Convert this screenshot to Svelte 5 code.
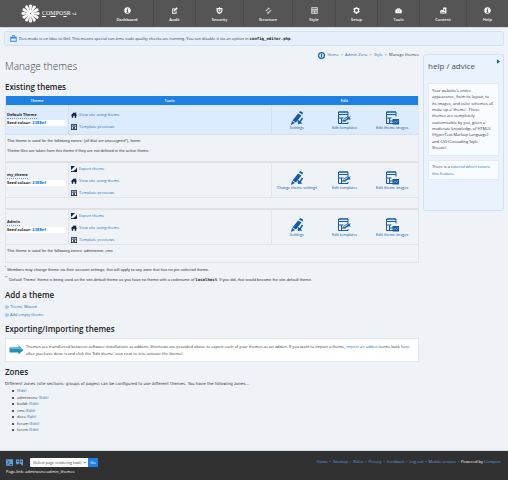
<script>
  const menu = [
    ['Dashboard', 'info', 53], ['Audit', 'audit', 42], ['Security', 'shield', 48],
    ['Structure', 'structure', 49], ['Style', 'style', 43], ['Setup', 'gear', 42],
    ['Tools', 'tools', 42], ['Content', 'content', 47], ['Help', 'info', 42]
  ];
  const columns = `100fr ${menu.map((m) => m[2] + 'fr').join(' ')}`;
  const tools = { export: 'Export theme', home: 'View site using theme', preview: 'Template previews' };
  const themes = [
    { name: 'Default Theme', tools: ['home', 'preview'], settings: 'Settings', kind: 'default' },
    { name: 'my_theme', tools: ['export', 'home', 'preview'], settings: 'Change theme settings', kind: 'empty' },
    { name: 'Admin', tools: ['export', 'home', 'preview'], settings: 'Settings', kind: 'admin' }
  ];
  const zones = ['', 'adminzone', 'buildr', 'cms', 'docs', 'forum', 'lorem'];
  const footerLinks = ['Home', 'Sitemap', 'Rules', 'Privacy', 'Feedback', 'Log out', 'Mobile version'];
  const advice = [
    "Your website's entire", 'appearance, from its layout, to', 'its images, and color schemes all',
    "make up a 'theme'. These", 'themes are completely', 'customisable by you, given a',
    'moderate knowledge of HTML5', '(HyperText Markup Language)', 'and CSS (Cascading Style', 'Sheets).'
  ];
  let tool = $state('');
</script>

{#snippet icon(name)}
  <svg class="icon" viewBox="0 0 24 24" fill="currentColor" stroke="none" aria-hidden="true">
    {#if name === 'info'}
      <path fill-rule="evenodd" d="M12 1a11 11 0 1 0 0 22a11 11 0 0 0 0-22zM10 5h4v4h-4zM9 10h5v7h2v3H8v-3h2v-4H9z" />
    {:else if name === 'audit'}
      <path d="M4 5h10v3H7v12h9v-5l3-3v11H4z" /><path d="M9 15l1-5L19 1l4 4-9 9zM9 10h5v2H9z" />
    {:else if name === 'shield'}
      <path fill-rule="evenodd" d="M12 0l3 3h7v9c0 6-5 10-10 12C7 22 2 18 2 12V3h7zM6 7v5c0 3 2 5 6 7c4-2 6-4 6-7V7z" /><path d="M9 8h6v3l-3 5-3-5z" />
    {:else if name === 'structure'}
      <path d="M1 13l9-8-1-3 7 1-2 7-2-3-8 8zM23 11l-9 9 1 3-8-1 2-7 2 3 8-8z" opacity=".75" />
    {:else if name === 'style'}
      <path fill-rule="evenodd" d="M1 1h22v22H1zM4 3v3h16V3zM4 9v3h16V9zM4 15v5h6v-5zM13 15v5h7v-5z" opacity=".85" />
    {:else if name === 'gear'}
      <path fill-rule="evenodd" d="M9 1h6l1 3 4-1 3 5-3 3 3 4-3 5-4-1-1 4H9l-1-4-4 1-3-5 3-4-3-3 3-5 4 1zM12 7a5 5 0 1 0 0 10a5 5 0 0 0 0-10z" />
    {:else if name === 'tools'}
      <path fill-rule="evenodd" d="M7 4h10v4h4l2 3v10H1V11l2-3h4zM9 6v2h6V6zM7 12v3h2v-3zM15 12v3h2v-3z" />
    {:else if name === 'content'}
      <path fill-rule="evenodd" d="M11 2h11v20H1V12l6-3 4 4zM16 5l-3 8h6zM4 15v4h13v-2H8z" />
    {:else if name === 'export'}
      <path fill="#0c2340" d="M0 0h16L0 16z" /><path fill="#0c2340" d="M24 6v18H8l-2-3 10-5z" /><path fill="#0c2340" d="M0 20h7v4H0z" />
    {:else if name === 'home'}
      <path fill="#0c2340" d="M12 1l5 5V2h4v8l3 3-2 2-1-1v9h-6v-8H9v8H3v-9l-1 1-2-2z" />
    {:else if name === 'preview'}
      <path fill="#0c2340" fill-rule="evenodd" d="M1 0h22v21h1v3H0v-3h1zM4 3v7h16V3zM4 12v9h16v-9z" /><path fill="#0c2340" d="M7 4h3v5H7zM14 4h3v5h-3zM8 13h8v3h-2v2h3v3H7v-3h3v-2H8z" />
    {:else if name === 'robot'}
      <path fill="#2d86e8" fill-rule="evenodd" d="M7 1h10v5h6v17H1V6h6zM9 3v3h6V3zM4 10v2h16v-2zM4 14v6h16v-6z" />
    {:else if name === 'crumb'}
      <path fill="#145ca4" fill-rule="evenodd" d="M12 0a12 12 0 1 0 0 24a12 12 0 0 0 0-24zM12 4a8 8 0 1 1 0 16a8 8 0 0 1 0-16z" /><path fill="#145ca4" d="M10 6h4v12h-4z" />
    {:else if name === 'chevrons'}
      <path fill="none" stroke="#3b95ee" stroke-width="5" d="M2 3l8 9-8 9M12 3l9 9-9 9" />
    {:else if name === 'console'}
      <path fill-rule="evenodd" d="M0 1h24v22H0zM4 5l6 6-6 6v3l9-9-9-8zM12 17v3h9v-3z" />
    {:else if name === 'feedback'}
      <path fill-rule="evenodd" d="M0 2h11v14H7l-4 5v-5H0zM4 6v4h4V6zM13 2h11v20h-3l-4-5h-4zM16 6v5h4V6z" />
    {/if}
  </svg>
{/snippet}

{#snippet editIcon(name)}
  <svg class="edit-icon" viewBox="0 0 28 28" fill="none" stroke="#155ca6" stroke-width="2" aria-hidden="true">
    {#if name === 'settings'}
      <path fill="#155ca6" stroke="none" d="M18 3l2-3 6 3-1 4zM16 5l7 4-11 14-7-4zM4 20l6 4-8 4z" />
      <path stroke-width="3" d="M25 14l-6 9" /><path fill="#155ca6" stroke="none" d="M15 17l1 9 9-1z" />
    {:else}
      <path d="M3 2h19v5H3zM3 7v18h19v-3M22 7v4M3 14h10M9 14v11M9 20h8" />
      <path fill="#155ca6" stroke="none" d="M3 1h19v2H3z" />
      {#if name === 'templates'}
        <path fill="#155ca6" stroke="none" d="M12 20l2-5 8-5 1 2 5-1-3 3 3 3h-6l-6 4z" /><path stroke="#dfeafa" d="M14 18l7-5" />
      {:else}
        <path fill="#155ca6" stroke="none" d="M15 16h13v11H15z" /><path stroke="#c9ddf5" d="M17 24l3-4 3 3 3-4" stroke-width="1" />
      {/if}
    {/if}
  </svg>
{/snippet}

<div class="page">
  <header style="grid-template-columns: {columns}">
    <a class="logo" href="#home" aria-label="Composr home">
      <svg viewBox="0 0 36 36" aria-hidden="true">
        {#each Array(12) as _, i}
          <path fill="#fff" d="M17 17L15 3Q17-1 21 2L19 17z" transform="rotate({i * 30} 18 18)" />
        {/each}
      </svg>
      <span class="brand"><u>C</u>O<u>M</u>PO<u>S</u>R <small>v4</small></span>
    </a>
    {#each menu as [label, glyph]}
      <a class="item" href="#{label}">{@render icon(glyph)}<span>{label}</span></a>
    {/each}
  </header>

  <p class="notice">{@render icon('robot')}<span>Dev-mode is on (due to Git). This means special run-time code quality checks are running. You can disable it via an option in <code>config_editor.php</code>.</span></p>

  <div class="body">
    <main>
      <nav class="crumbs">{@render icon('crumb')}<a href="#home">Home</a><b>&gt;</b><a href="#admin">Admin Zone</a><b>&gt;</b><a href="#style">Style</a><b>&gt;</b><span>Manage themes</span></nav>
      <h1>Manage themes</h1>
      <h2>Existing themes</h2>
      <table>
        <colgroup><col class="c-theme" /><col /><col class="c-edit" /></colgroup>
        <thead><tr><th>Theme</th><th>Tools</th><th>Edit</th></tr></thead>
        {#each themes as t}
          <tbody class={t.kind}>
            <tr class="main-row">
              <td><strong class="name">{t.name}</strong><div class="seed">Seed colour: <b>2388ef</b></div></td>
              <td>
                <div class="tools">
                  {#each t.tools as k}<a href="#{k}">{@render icon(k)}{tools[k]}</a>{/each}
                </div>
              </td>
              <td>
                <div class="edits">
                  <a href="#settings">{@render editIcon('settings')}{t.settings}</a>
                  <a href="#templates">{@render editIcon('templates')}Edit templates</a>
                  <a href="#images">{@render editIcon('images')}Edit theme images</a>
                </div>
              </td>
            </tr>
            <tr class="desc">
              <td colspan="3">
                {#if t.kind === 'default'}
                  <p>This theme is used for the following zones: (<i>all that are unassigned*</i>), lorem</p>
                  <p>Theme files are taken from this theme if they are not defined in the active theme.</p>
                {:else if t.kind === 'admin'}
                  <p>This theme is used for the following zones: adminzone, cms</p>
                {/if}
              </td>
            </tr>
          </tbody>
        {/each}
      </table>
      <p class="note"><sup>*</sup> Members may change theme via their account settings; this will apply to any zone that has no pre-selected theme.</p>
      <p class="note"><sup>**</sup> 'Default Theme' theme is being used as the site-default theme as you have no theme with a codename of <code>localhost</code>. If you did, that would become the site-default theme.</p>

      <h2>Add a theme</h2>
      <div class="actions">
        <a href="#wizard">{@render icon('chevrons')}Theme Wizard</a>
        <a href="#add">{@render icon('chevrons')}Add empty theme</a>
      </div>

      <h2>Exporting/Importing themes</h2>
      <div class="transfer">
        <svg viewBox="0 0 30 20" aria-hidden="true">
          <path fill="#2b8fb5" d="M1 5h18V1l10 9-10 9v-4H1z" /><path fill="#4dbfe4" d="M1 5h18V1l10 9-10-2H1z" />
        </svg>
        <p>Themes are transferred between software installations as addons. Shortcuts are provided above to export each of your themes as an addon. If you want to import a theme, <a href="#import">import an addon</a> (come back here after you have done it and click the 'Edit theme' icon next to it to activate the theme).</p>
      </div>

      <h2>Zones</h2>
      <p class="intro">Different zones (site sections: groups of pages) can be configured to use different themes. You have the following zones...</p>
      <ul>
        {#each zones as z}<li><span>{z} <a href="#zone-{z}">(Edit)</a></span></li>{/each}
      </ul>
    </main>

    <aside>
      <button class="toggle" aria-label="Hide panel"><svg viewBox="0 0 4 6"><path fill="#145ca4" d="M0 0l4 3-4 3z" /></svg></button>
      <h2>help / advice</h2>
      <p class="card tall">{#each advice as line}<span>{line + ' '}</span>{/each}</p>
      <p class="card">There is a <a href="#tutorial">tutorial which covers this feature</a>.</p>
    </aside>
  </div>

  <footer>
    <div class="left">
      <div class="controls">
        <a href="#console" aria-label="Console">{@render icon('console')}</a>
        <a href="#feedback" aria-label="Feedback">{@render icon('feedback')}</a>
        <form onsubmit={(e) => e.preventDefault()}>
          <span class="pick">
            <select aria-label="Page rendering tool" bind:value={tool}><option value="">(Select page rendering tool)</option></select>
            <svg viewBox="0 0 6 4" aria-hidden="true"><path d="M1 1l2 2 2-2" fill="none" stroke="#444" /></svg>
          </span>
          <button>Go</button>
        </form>
      </div>
      <div class="pagelink">Page-link: adminzone:admin_themes</div>
    </div>
    <div class="links">{#each footerLinks as l}<a href="#{l}">{l}</a><span>·</span>{/each}<span>Powered by <a href="#composr">Composr</a></span></div>
  </footer>
</div>

<style>
  :global(body) { background: #eff3f8; }
  .page { font: 4px/6px "Open Sans", "Noto Sans", sans-serif; color: #333; min-height: 100vh; display: flex; flex-direction: column; }
  .page * { box-sizing: border-box; }
  a { color: #276cb0; text-decoration: none; }
  p, h1, h2, ul { margin: 0; }
  code { font: bold 4px/6px "DejaVu Sans Mono", monospace; color: #222; }
  .icon { width: 6px; height: 6px; flex: none; display: block; }
  header { display: grid; height: 28px; background: #555; border-bottom: 1px solid #d4d7da; }
  .logo { display: flex; align-items: center; padding-left: 21px; gap: 2px; color: #fff; }
  .logo svg { width: 19px; height: 19px; }
  .brand { font: 6px/8px "Liberation Serif", serif; }
  .brand small { font-size: 4px; }
  .item { display: flex; flex-direction: column; align-items: center; gap: 3px; padding-top: 7px; color: #fff; font-weight: 600; border-left: 1px solid #4b4b4b; }
  .item .icon { width: 7px; height: 7px; }
  .item span { line-height: 6px; }
  .notice { display: flex; align-items: center; gap: 2px; height: 15px; margin: 3px 4px 0; padding: 0 5px; background: #e5f0fc; border: 1px solid #cfe3f8; border-radius: 2px; }
  .notice .icon { width: 7px; height: 7px; }
  .body { display: flex; align-items: flex-start; gap: 4px; padding: 5px 4px 0 5px; flex: 1; }
  main { flex: 1; min-width: 0; }
  .crumbs { display: flex; justify-content: flex-end; align-items: center; gap: 2px; height: 8px; }
  .crumbs b { font-weight: 600; }
  .crumbs .icon { width: 7px; height: 7px; }
  h1 { font-size: 10px; line-height: 14px; font-weight: 300; color: #444; }
  h2 { font-size: 8px; line-height: 12px; font-weight: 600; color: #222; }
  h1 + h2 { margin-top: 8px; }
  table { width: 100%; table-layout: fixed; border-collapse: separate; border-spacing: 0; margin-top: 3px; border: 1px solid #e1e5e9; border-top: 0; }
  .c-theme { width: 62px; }
  .c-edit { width: 147px; }
  th { background: #1f80e4; color: #fff; font-weight: 600; height: 9px; padding: 0; }
  td { padding: 0 2px 0 1px; vertical-align: middle; }
  .main-row td { height: 35px; border-bottom: 1px solid #e1e5e9; }
  .main-row td:first-child { padding-bottom: 2px; }
  .main-row td + td { border-left: 1px solid #e1e5e9; padding-top: 2px; }
  .default .main-row td { height: 30px; background: #dcebfd; border-color: #d3e0ee; }
  .desc td { height: 12px; border-bottom: 2px solid #dfe1e3; }
  .default .desc td { height: 28px; padding-bottom: 4px; }
  .default .desc p + p { margin-top: 4px; }
  .admin .desc td { height: 17px; border-bottom: 0; padding-bottom: 5px; }
  .desc, .note { font-family: "Liberation Sans", sans-serif; }
  .name { display: table; color: #222; border-bottom: 1px dotted #6f9ccc; }
  .seed { background: #fff; font-weight: 700; color: #222; margin-top: 1px; }
  .seed b { color: #2388ef; }
  .tools { display: flex; flex-direction: column; gap: 6px; }
  .tools a { display: flex; align-items: center; gap: 2px; }
  .tools .icon { margin-left: 1px; }
  .edits { display: grid; grid-template-columns: repeat(3, 1fr); font-family: Lato, sans-serif; }
  .edits a { display: flex; flex-direction: column; align-items: center; white-space: nowrap; }
  .edit-icon { width: 14px; height: 14px; }
  .note { margin-top: 4px; }
  sup { font-size: 3px; line-height: 0; }
  .note + h2 { margin-top: 6px; }
  .actions { display: flex; flex-direction: column; gap: 2px; margin: 3px 0 5px; }
  .actions a { display: flex; align-items: center; gap: 1px; }
  .actions .icon { width: 4px; height: 4px; }
  .transfer { display: flex; align-items: center; gap: 2px; height: 24px; margin: 3px 0 4px; padding: 0 3px; background: #fff; border: 1px solid #e4e8ec; line-height: 7px; }
  .transfer svg { width: 15px; height: 10px; flex: none; }
  .intro { margin-top: 3px; font-family: "DejaVu Sans", sans-serif; }
  ul { display: flex; flex-direction: column; justify-content: space-between; min-height: 45px; margin-top: 1px; padding-left: 7px; list-style: none; }
  li { display: flex; align-items: center; gap: 3px; }
  li::before { content: ""; width: 2px; height: 2px; border-radius: 1px; background: #222; }
  aside { position: relative; width: 81px; min-height: 157px; margin-top: 3px; padding: 5px 4px; background: #eaf2fe; border: 1px solid #cfe3f8; border-radius: 3px 0 3px 3px; }
  aside h2 { font-weight: 400; margin-bottom: 11px; color: #444f5a; }
  .card { background: #f8fbff; border: 1px solid #e1ebf5; padding: 2px 3px; margin-bottom: 4px; line-height: 7px; }
  .tall { display: flex; flex-direction: column; justify-content: space-between; min-height: 73px; padding: 4px 3px; line-height: 6px; }
  .toggle { position: absolute; top: 4px; right: 3px; border: 0; padding: 0; background: none; display: flex; }
  .toggle svg { width: 3px; height: 5px; }
  footer { display: flex; justify-content: space-between; height: 30px; padding: 7px 7px 0 6px; background: #313131; border-top: 1px solid #d5dade; color: #fff; }
  footer a { color: #5f9fe2; }
  .controls { display: flex; align-items: center; height: 9px; gap: 3px; }
  .controls .icon { width: 7px; height: 7px; }
  form { display: flex; height: 9px; margin-left: 4px; }
  .pick { position: relative; display: flex; }
  .pick svg { position: absolute; right: 1px; top: 3px; width: 4px; height: 3px; pointer-events: none; }
  select { appearance: none; width: 58px; height: 9px; padding: 0 4px 0 3px; font: 4px/6px Lato, sans-serif; color: #555; background: #fff; border: 0; border-radius: 1px 0 0 1px; }
  form button { width: 10px; height: 9px; padding: 0; border: 0; font: inherit; color: #fff; background: #1f80e4; }
  .pagelink { margin-top: 2px; }
  .links { display: flex; gap: 2px; line-height: 8px; }
</style>
